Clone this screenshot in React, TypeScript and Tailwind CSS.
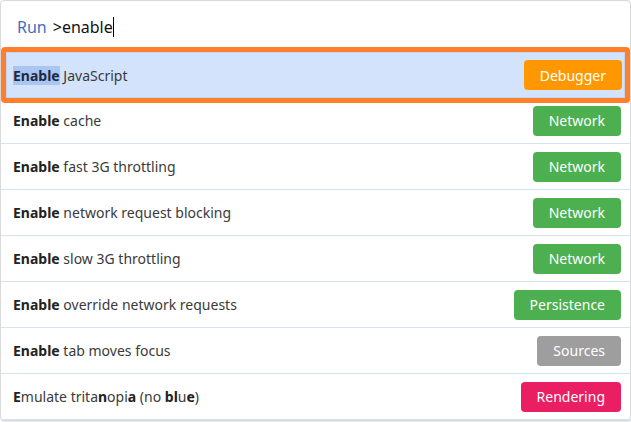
import React from "react";

type Row = { parts: [string, boolean][]; tag: string; color: string };

const rows: Row[] = [
  { parts: [["Enable", true], [" cache", false]], tag: "Network", color: "bg-[#4caf50]" },
  { parts: [["Enable", true], [" fast 3G throttling", false]], tag: "Network", color: "bg-[#4caf50]" },
  { parts: [["Enable", true], [" network request blocking", false]], tag: "Network", color: "bg-[#4caf50]" },
  { parts: [["Enable", true], [" slow 3G throttling", false]], tag: "Network", color: "bg-[#4caf50]" },
  { parts: [["Enable", true], [" override network requests", false]], tag: "Persistence", color: "bg-[#4caf50]" },
  { parts: [["Enable", true], [" tab moves focus", false]], tag: "Sources", color: "bg-[#9e9e9e]" },
  {
    parts: [
      ["E", true],
      ["mulate trita", false],
      ["n", true],
      ["opi", false],
      ["a", true],
      [" (no ", false],
      ["bl", true],
      ["u", false],
      ["e", true],
      [")", false],
    ],
    tag: "Rendering",
    color: "bg-[#e91e63]",
  },
];

export default function App() {
  return (
    <div className="w-[631px] h-[422px] overflow-hidden bg-white" style={{ fontFamily: '"Noto Sans", "Open Sans", sans-serif' }}>
      <div className="w-[631px] border border-[#d9d9d9] rounded-[4px] bg-white shadow-[1px_1px_2px_rgba(0,0,0,0.12)]">
        <div className="h-[51px] flex items-center pl-[16px] text-[16px]">
          <span className="text-[#3b6fc2]">Run</span>
          <span className="ml-[6px] text-[#111]">&gt;enable</span>
          <span className="w-px h-[20px] bg-black"></span>
        </div>
        <div className="relative z-10 -mt-[5px] -mb-[5px] p-[5px] bg-[#ff7f2a] rounded-[4px]">
          <div className="h-[46px] flex items-center justify-between pl-[6px] pr-[2px] bg-[#d3e3fb] border border-[#c2d6f5] text-[14px] text-[#3a3a3a]">
            <span>
              <span className="font-bold text-[#1d2a44] bg-[#a9c6f3]">Enable</span>
              <span> JavaScript</span>
            </span>
            <span className="h-[30px] px-[16px] flex items-center rounded-[4px] bg-[#ff9800] text-white text-[14px]">Debugger</span>
          </div>
        </div>
        {rows.map((r, i) => (
          <div key={i} className="h-[46px] flex items-center justify-between pl-[12px] pr-[9px] border-b border-[#d5e3f7] text-[14px] text-[#3a3a3a]">
            <span>
              {r.parts.map(([t, b], j) => (
                <span key={j} className={b ? "font-bold text-[#222]" : ""}>{t}</span>
              ))}
            </span>
            <span className={`h-[30px] px-[16px] flex items-center rounded-[4px] text-white text-[14px] ${r.color}`}>{r.tag}</span>
          </div>
        ))}
      </div>
    </div>
  );
}
